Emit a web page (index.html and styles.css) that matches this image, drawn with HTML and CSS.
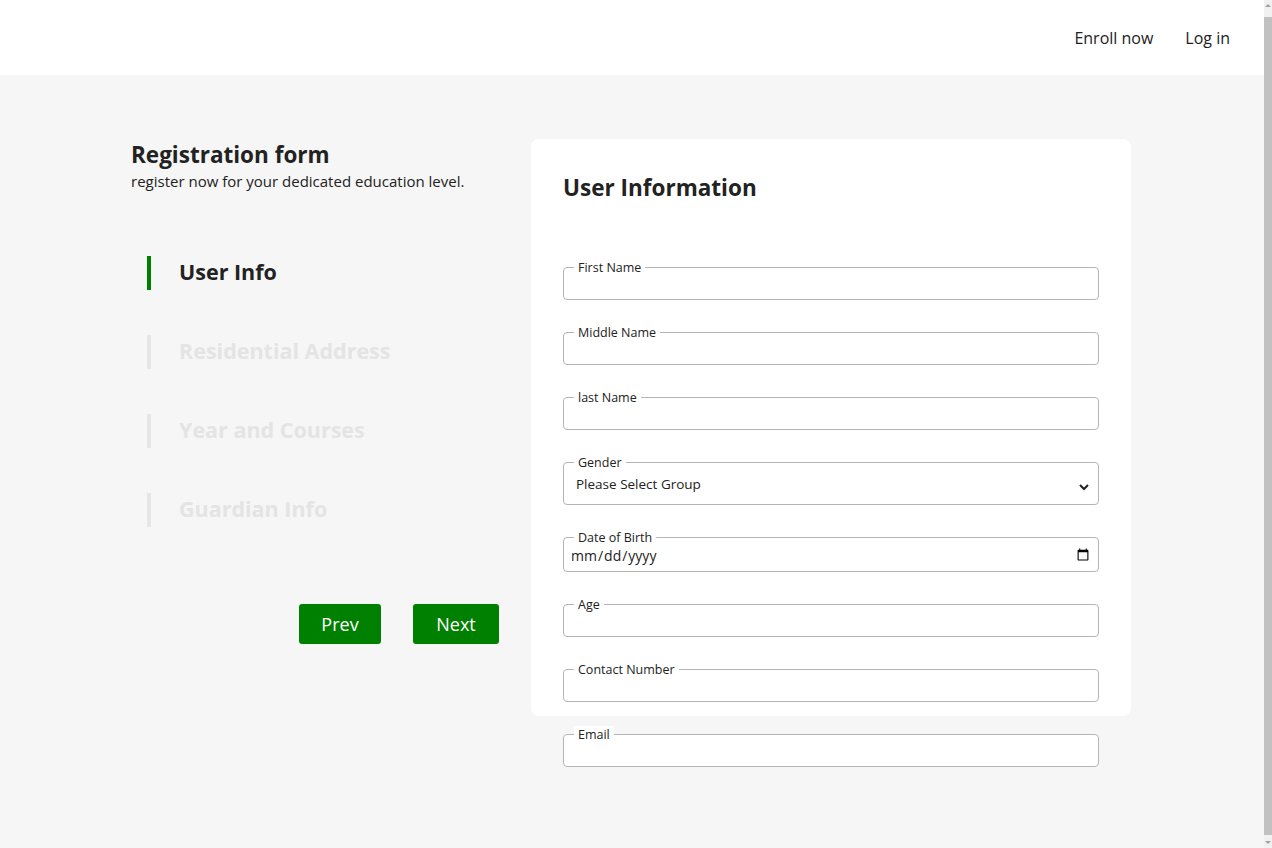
FILE: index.html
```html
<!DOCTYPE html>
<html lang="en">
<head>
<meta charset="utf-8">
<title>Registration form</title>
<link rel="stylesheet" href="styles.css">
</head>
<body>
<header class="topbar">
  <a class="nav-link" href="#">Enroll now</a>
  <a class="nav-link" href="#">Log in</a>
</header>
<main class="wrap">
  <aside class="side">
    <h1 class="side-title">Registration form</h1>
    <p class="side-sub">register now for your dedicated education level.</p>
    <ul class="steps">
      <li class="step active">User Info</li>
      <li class="step">Residential Address</li>
      <li class="step">Year and Courses</li>
      <li class="step">Guardian Info</li>
    </ul>
    <div class="actions">
      <button class="btn btn-prev" type="button">Prev</button>
      <button class="btn btn-next" type="button">Next</button>
    </div>
  </aside>
  <section class="card">
    <h2 class="card-title">User Information</h2>
    <form class="form">
      <fieldset class="field">
        <legend>First Name</legend>
        <input class="txt" type="text">
      </fieldset>
      <fieldset class="field">
        <legend>Middle Name</legend>
        <input class="txt" type="text">
      </fieldset>
      <fieldset class="field">
        <legend>last Name</legend>
        <input class="txt" type="text">
      </fieldset>
      <fieldset class="field">
        <legend>Gender</legend>
        <select class="sel">
          <option>Please Select Group</option>
          <option>Male</option>
          <option>Female</option>
        </select>
      </fieldset>
      <fieldset class="field">
        <legend>Date of Birth</legend>
        <input class="date" type="date">
      </fieldset>
      <fieldset class="field">
        <legend>Age</legend>
        <input class="txt" type="text">
      </fieldset>
      <fieldset class="field">
        <legend>Contact Number</legend>
        <input class="txt" type="text">
      </fieldset>
      <fieldset class="field">
        <legend>Email</legend>
        <input class="txt" type="email">
      </fieldset>
    </form>
  </section>
</main>
<div class="scrollbar" aria-hidden="true">
  <span class="sb-arrow sb-up"></span>
  <span class="sb-thumb"></span>
  <span class="sb-arrow sb-down"></span>
</div>
</body>
</html>
```
FILE: styles.css
```css
* { box-sizing: border-box; }
html, body { margin: 0; padding: 0; }
body {
  background: #f6f6f6;
  font-family: "Open Sans", "Noto Sans", sans-serif;
  color: #222;
  min-height: 848px;
  padding-right: 10px;
}
.scrollbar {
  position: fixed;
  top: 0;
  right: 0;
  width: 8px;
  height: 100%;
  background: #f1f1f1;
  display: flex;
  flex-direction: column;
  align-items: center;
}
.sb-arrow {
  width: 0;
  height: 0;
  border-left: 3px solid transparent;
  border-right: 3px solid transparent;
  flex: none;
}
.sb-up {
  margin-top: 4px;
  border-bottom: 3px solid #a3a3a3;
}
.sb-down {
  margin-bottom: 4px;
  border-top: 3px solid #a3a3a3;
}
.sb-thumb {
  flex: 1;
  width: 8px;
  margin: 10px 0 6px;
  background: #c1c1c1;
}
.topbar {
  height: 75px;
  background: #fff;
  display: flex;
  justify-content: flex-end;
  align-items: center;
  gap: 32px;
  padding-right: 34px;
  margin-right: -2px;
}
.nav-link {
  color: #222;
  text-decoration: none;
  font-size: 16px;
}
.wrap {
  width: 1000px;
  margin: 64px auto 0;
  display: flex;
  gap: 32px;
  align-items: flex-start;
}
.side { width: 368px; }
.side-title {
  margin: 0;
  font-size: 22.5px;
  line-height: 31px;
  font-weight: 700;
}
.side-sub {
  margin: 0;
  font-size: 15px;
  line-height: 22px;
}
.steps {
  list-style: none;
  margin: 64px 0 0 16px;
  padding: 0;
  display: flex;
  flex-direction: column;
  gap: 45px;
}
.step {
  height: 34px;
  line-height: 32px;
  border-left: 4px solid #e6e6e6;
  padding-left: 28px;
  font-size: 21.5px;
  font-weight: 700;
  color: #e4e4e4;
}
.step.active {
  border-left-color: #008000;
  color: #222;
}
.actions {
  margin-top: 77px;
  display: flex;
  justify-content: flex-end;
  gap: 32px;
}
.btn {
  height: 40px;
  border: none;
  border-radius: 3px;
  background: #008000;
  color: #fff;
  font-family: inherit;
  font-size: 18px;
  padding: 0;
}
.btn-prev { width: 82px; }
.btn-next { width: 86px; }
.card {
  width: 600px;
  height: 577px;
  background: #fff;
  border-radius: 8px;
  padding: 32px;
}
.card-title {
  margin: 0 0 55px;
  font-size: 22.5px;
  line-height: 33px;
  font-weight: 700;
}
.form {
  display: flex;
  flex-direction: column;
  gap: 24px;
}
.field {
  margin: 0;
  padding: 0 6px;
  border: 1px solid #b5b5b5;
  border-radius: 4px;
  min-width: 0;
  background: #fff;
}
.field legend {
  margin-left: 4px;
  padding: 0 4px;
  font-size: 12.5px;
  line-height: 17px;
  background: #fff;
}
.txt {
  display: block;
  width: 100%;
  height: 23px;
  border: none;
  outline: none;
  padding: 0 2px;
  font-family: inherit;
  font-size: 14px;
  background: transparent;
}
.sel {
  display: block;
  width: 100%;
  height: 33px;
  border: none;
  outline: none;
  padding: 0 2px 7px;
  font-family: inherit;
  font-size: 13.5px;
  color: #222;
  background: transparent;
}
.date {
  display: block;
  width: 100%;
  height: 25px;
  border: none;
  outline: none;
  padding: 0 0 7px;
  font-family: inherit;
  font-size: 14px;
  color: #222;
  background: transparent;
}
```
